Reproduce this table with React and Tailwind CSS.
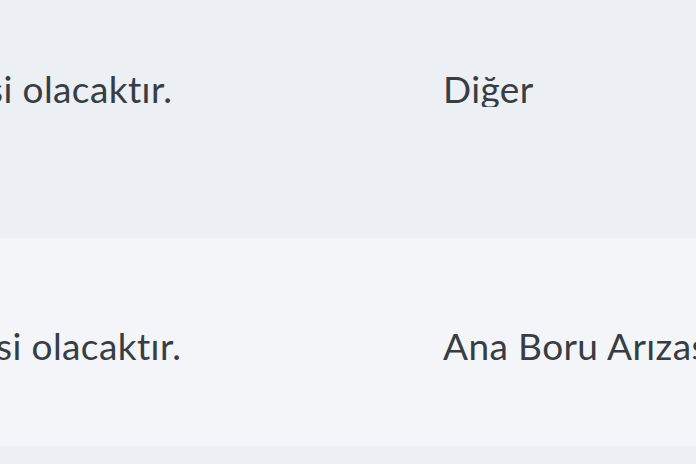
import React from 'react';

const rows = [
    { note: 'si olacaktır.', shift: '-ml-[13px]', type: 'Diğer', cls: '-mt-[58px] h-[296px] bg-[#eceff3] pb-[4px]' },
    { note: 'si olacaktır.', shift: '-ml-[4px]', type: 'Ana Boru Arızası', cls: 'h-[208px] bg-[#f3f5f8] pt-[6px]' },
];

export default function App() {
    return (
        <div className="w-[696px] h-[464px] overflow-hidden bg-[#eceff3] text-[#383d44] font-['Lato','Liberation_Sans',sans-serif]">
            {rows.map((r, i) => (
                <div
                    key={i}
                    className={r.cls + ' flex items-center text-[37px] leading-none tracking-[0.4px] whitespace-nowrap'}
                >
                    <div className="w-[443px] shrink-0 overflow-hidden">
                        <span className={'block ' + r.shift}>{r.note}</span>
                    </div>
                    <div className="flex-1 overflow-hidden">{r.type}</div>
                </div>
            ))}
            <div className="h-[40px] bg-[#eceff3]" />
        </div>
    );
}
